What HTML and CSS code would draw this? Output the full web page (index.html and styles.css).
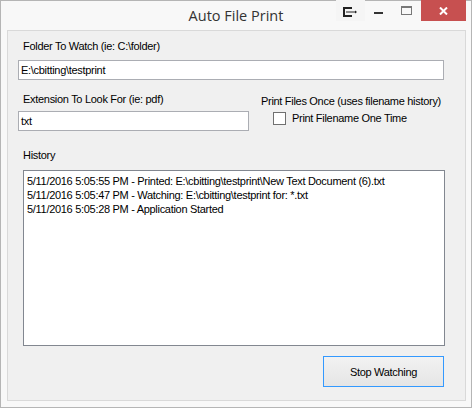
FILE: index.html
```html
<!DOCTYPE html>
<html>
<head>
<meta charset="utf-8">
<link rel="stylesheet" href="styles.css">
</head>
<body>
<div class="window">
  <div class="titlebar">
    <div class="spacer"></div>
    <div class="title">Auto File Print</div>
    <div class="caption-buttons">
      <div class="cbtn cbtn-snap">
        <svg width="16" height="10" viewBox="0 0 16 10">
          <path d="M9 1H1V9H9" fill="none" stroke="#222" stroke-width="2"/>
          <path d="M3 5H13" stroke="#222" stroke-width="1"/>
          <path d="M12 3.5L14 5L12 6.5Z" fill="#222"/>
        </svg>
      </div>
      <div class="cbtn cbtn-min">
        <svg width="9" height="3" viewBox="0 0 9 3"><rect x="0" y="0" width="9" height="2" fill="#333"/></svg>
      </div>
      <div class="cbtn cbtn-max">
        <svg width="11" height="9" viewBox="0 0 11 9">
          <rect x="0.5" y="0.5" width="10" height="8" fill="none" stroke="#777" stroke-width="1"/>
          <rect x="0" y="0" width="11" height="2" fill="#777"/>
        </svg>
      </div>
      <div class="cbtn cbtn-close">
        <svg width="9" height="8" viewBox="0 0 9 8">
          <path d="M1 0.5L8 7.5M8 0.5L1 7.5" stroke="#fff" stroke-width="2"/>
        </svg>
      </div>
    </div>
  </div>
  <div class="client">
    <div class="label label-folder">Folder To Watch (ie: C:\folder)</div>
    <div class="textbox textbox-wide">E:\cbitting\testprint</div>
    <div class="row">
      <div class="col-left">
        <div class="label label-ext">Extension To Look For (ie: pdf)</div>
        <div class="textbox textbox-narrow">txt</div>
      </div>
      <div class="col-right">
        <div class="label label-once">Print Files Once (uses filename history)</div>
        <div class="checkrow">
          <span class="checkbox"></span>
          <span class="checklabel">Print Filename One Time</span>
        </div>
      </div>
    </div>
    <div class="label label-history">History</div>
    <div class="listbox">
      <div class="item">5/11/2016 5:05:55 PM - Printed: E:\cbitting\testprint\New Text Document (6).txt</div>
      <div class="item">5/11/2016 5:05:47 PM - Watching: E:\cbitting\testprint for: *.txt</div>
      <div class="item">5/11/2016 5:05:28 PM - Application Started</div>
    </div>
    <div class="button-row">
      <div class="button">Stop Watching</div>
    </div>
  </div>
</div>
</body>
</html>
```
FILE: styles.css
```css
html, body {
  margin: 0;
  padding: 0;
  background: #ffffff;
}

.window {
  width: 472px;
  height: 408px;
  box-sizing: border-box;
  border: 1px solid #b5b5b5;
  background: #f8f8f8;
  display: flex;
  flex-direction: column;
}

.titlebar {
  height: 29px;
  display: grid;
  grid-template-columns: 1fr auto 1fr;
  align-items: start;
}

.title {
  font-family: "Open Sans", "Noto Sans", sans-serif;
  font-size: 14.5px;
  color: #333;
  line-height: 29px;
}

.caption-buttons {
  justify-self: end;
  display: flex;
  margin-right: 5px;
  margin-top: -1px;
}

.cbtn {
  height: 21px;
  display: flex;
  align-items: center;
  justify-content: center;
}

.cbtn-snap {
  width: 29px;
  background: #f5f5f5;
}

.cbtn-snap svg {
  margin-top: 2px;
}

.cbtn-min {
  width: 27px;
}

.cbtn-min svg {
  margin-top: 6px;
}

.cbtn-max {
  width: 29px;
}

.cbtn-close {
  width: 45px;
  background: #c75050;
}

.client {
  margin-left: 6px;
  width: 459px;
  height: 371px;
  box-sizing: border-box;
  border: 1px solid #d9d9d9;
  background: #f0f0f0;
  padding: 9px 0 0 10px;
  font-family: "Liberation Sans", Arial, sans-serif;
  font-size: 11px;
  letter-spacing: -0.3px;
  color: #000;
}

.label {
  line-height: 13px;
  height: 13px;
  white-space: nowrap;
}

.label-folder {
  margin-left: 5px;
}

.textbox {
  box-sizing: border-box;
  height: 20px;
  border: 1px solid #abadb3;
  background: #fff;
  line-height: 18px;
  padding-left: 2px;
  white-space: nowrap;
}

.textbox-wide {
  margin-top: 7px;
  width: 426px;
}

.row {
  display: flex;
}

.col-left {
  width: 231px;
}

.label-ext {
  margin-top: 13px;
  margin-left: 5px;
}

.textbox-narrow {
  margin-top: 5px;
  width: 231px;
}

.col-right {
  margin-left: 12px;
}

.label-once {
  margin-top: 15px;
}

.checkrow {
  display: flex;
  align-items: center;
  margin-top: 4px;
  margin-left: 12px;
  height: 13px;
}

.checkbox {
  width: 13px;
  height: 13px;
  box-sizing: border-box;
  border: 1px solid #707070;
  background: #fff;
}

.checklabel {
  margin-left: 6px;
  line-height: 13px;
}

.label-history {
  margin-top: 18px;
  margin-left: 5px;
}

.listbox {
  margin-top: 8px;
  margin-left: 5px;
  width: 422px;
  height: 176px;
  box-sizing: border-box;
  border: 1px solid #828790;
  background: #fff;
  padding: 3px 0 0 3px;
}

.item {
  line-height: 14px;
  height: 14px;
  white-space: nowrap;
}

.button-row {
  display: flex;
  justify-content: flex-end;
  width: 426px;
  margin-top: 10px;
}

.button {
  width: 121px;
  height: 31px;
  box-sizing: border-box;
  border: 1px solid #3399ff;
  background: linear-gradient(#f2f2f2, #e5e5e5);
  display: flex;
  align-items: center;
  justify-content: center;
}
```
